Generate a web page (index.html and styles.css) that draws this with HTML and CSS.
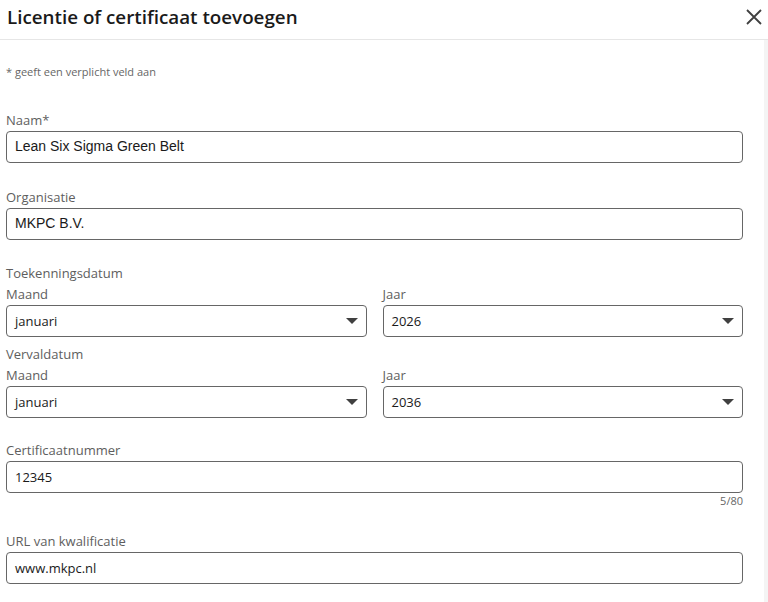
FILE: index.html
```html
<!DOCTYPE html>
<html lang="nl">
<head>
<meta charset="utf-8">
<title>Licentie of certificaat toevoegen</title>
<link rel="stylesheet" href="styles.css">
</head>
<body>
<div class="dialog">
  <header class="dialog-header">
    <h1 class="dialog-title">Licentie of certificaat toevoegen</h1>
    <button class="close-btn" aria-label="Sluiten">
      <svg width="16" height="16" viewBox="0 0 16 16"><path d="M1 1L15 15M15 1L1 15" stroke="#404040" stroke-width="1.8" fill="none"/></svg>
    </button>
  </header>
  <div class="dialog-body">
    <form class="form">
      <p class="note">* geeft een verplicht veld aan</p>

      <div class="field field-first">
        <label class="label">Naam*</label>
        <div class="input input-arial">Lean Six Sigma Green Belt</div>
      </div>

      <div class="field">
        <label class="label">Organisatie</label>
        <div class="input input-arial">MKPC B.V.</div>
      </div>

      <div class="group">
        <div class="label">Toekenningsdatum</div>
        <div class="cols">
          <div class="col">
            <label class="label">Maand</label>
            <div class="select"><span>januari</span><span class="caret"></span></div>
          </div>
          <div class="col">
            <label class="label">Jaar</label>
            <div class="select"><span>2026</span><span class="caret"></span></div>
          </div>
        </div>
      </div>

      <div class="group group-tight">
        <div class="label">Vervaldatum</div>
        <div class="cols">
          <div class="col">
            <label class="label">Maand</label>
            <div class="select"><span>januari</span><span class="caret"></span></div>
          </div>
          <div class="col">
            <label class="label">Jaar</label>
            <div class="select"><span>2036</span><span class="caret"></span></div>
          </div>
        </div>
      </div>

      <div class="field field-cert">
        <label class="label">Certificaatnummer</label>
        <div class="input">12345</div>
        <div class="counter">5/80</div>
      </div>

      <div class="field field-url">
        <label class="label">URL van kwalificatie</label>
        <div class="input">www.mkpc.nl</div>
      </div>
    </form>
    <div class="scrolltrack"></div>
  </div>
</div>
</body>
</html>
```

FILE: styles.css
```css
* { box-sizing: border-box; }
html, body { margin: 0; padding: 0; background: #fff; }
body {
  font-family: "Open Sans", "Noto Sans", sans-serif;
  color: #191919;
  width: 768px;
  height: 602px;
  overflow: hidden;
}
.dialog { width: 768px; }
.dialog-header {
  height: 40px;
  border-bottom: 1px solid #e6e6e6;
  display: flex;
  align-items: center;
  justify-content: space-between;
  padding: 0 6px 0 7px;
}
.dialog-title {
  margin: 0;
  font-size: 18.8px;
  font-weight: 600;
  line-height: 24px;
  color: #1a1a1a;
  margin-top: -6px;
}
.close-btn {
  border: 0;
  background: transparent;
  padding: 0;
  width: 16px;
  height: 16px;
  margin-top: -6px;
  display: flex;
}
.dialog-body {
  display: flex;
  height: 562px;
}
.form {
  flex: 1;
  padding: 0 21px 0 6px;
}
.scrolltrack {
  width: 4px;
  background: #f4f4f4;
}
.note {
  margin: 24px 0 0;
  font-size: 11px;
  line-height: 16px;
  color: #666;
}
.label {
  display: block;
  font-size: 13px;
  line-height: 20px;
  color: #5e5e5e;
  margin-bottom: 1px;
}
.field { margin-top: 24px; }
.field-first { margin-top: 30px; }
.field-cert { margin-top: 22px; }
.field-url { margin-top: 22px; }
.group { margin-top: 23px; }
.group-tight { margin-top: 7px; }
.cols {
  display: grid;
  grid-template-columns: 1fr 1fr;
  gap: 16px;
}
.input, .select {
  height: 32px;
  border: 1px solid #666;
  border-radius: 4px;
  padding: 0 8px;
  display: flex;
  align-items: center;
  font-size: 13px;
  color: #1a1a1a;
}
.input-arial {
  font-family: "Liberation Sans", Arial, sans-serif;
  font-size: 14px;
  padding-bottom: 2px;
}
.select { justify-content: space-between; }
.caret {
  width: 0;
  height: 0;
  border-left: 6.5px solid transparent;
  border-right: 6.5px solid transparent;
  border-top: 6px solid #404040;
}
.counter {
  text-align: right;
  font-size: 11px;
  line-height: 16px;
  color: #666;
}
```
